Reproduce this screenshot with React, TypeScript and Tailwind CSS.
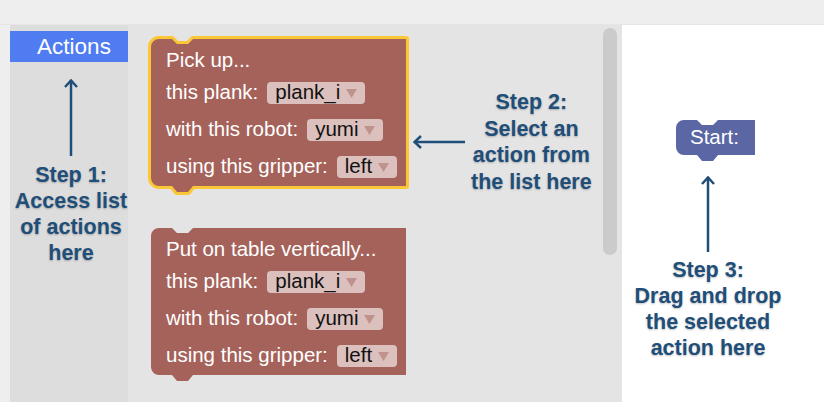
const font = { fontFamily: '"Liberation Sans", Arial, sans-serif' };

function BlockShape({ w, h, fill, stroke }: { w: number; h: number; fill: string; stroke?: string }) {
    const d = `M0,8 A8,8 0 0 1 8,0 H21 L26,5 H37 L42,0 H${w} V${h} H42 L37,${h + 6} H26 L21,${h} H8 A8,8 0 0 1 0,${h - 8} Z`;
    return (
        <svg className="absolute left-0 top-0 overflow-visible" width={w} height={h}>
            <path d={d} fill={fill} stroke={stroke ?? "none"} strokeWidth={stroke ? 6 : 0} paintOrder="stroke" strokeLinejoin="round" />
        </svg>
    );
}

function Field({ value }: { value: string }) {
    return (
        <span className="ml-[9px] flex h-[22px] items-center rounded-[4px] bg-[#dbc0bd] pl-[8px] pr-[8px] text-[20.5px] leading-none text-[#111]">
            {value}
            <svg width="11" height="9" viewBox="0 0 11 9" className="ml-[6px] mt-[2px]">
                <path d="M0,0 H11 L5.5,9 Z" fill="#bf928c" />
            </svg>
        </span>
    );
}

function ActionBlock({ title, selected }: { title: string; selected?: boolean }) {
    return (
        <div className="relative h-[147px] w-[255px]">
            <BlockShape w={255} h={147} fill="#a5625a" stroke={selected ? "#fcc736" : undefined} />
            <div className="relative flex flex-col pl-[15px] pt-[7px] text-[20.5px] text-white">
                <div className="flex h-[28px] items-center">{title}</div>
                <div className="flex h-[37px] items-center">
                    this plank:<Field value="plank_i" />
                </div>
                <div className="flex h-[37px] items-center">
                    with this robot:<Field value="yumi" />
                </div>
                <div className="flex h-[37px] items-center">
                    using this gripper:<Field value="left" />
                </div>
            </div>
        </div>
    );
}

function UpArrow({ h }: { h: number }) {
    return (
        <svg width="14" height={h} viewBox={`0 0 14 ${h}`}>
            <path d={`M7,1 V${h}`} stroke="#1f4e79" strokeWidth="2.5" fill="none" />
            <path d="M1,8 L7,1.5 L13,8" stroke="#1f4e79" strokeWidth="2.5" fill="none" />
        </svg>
    );
}

function StepText({ lines, leading = "leading-[26px]" }: { lines: string[]; leading?: string }) {
    return (
        <div className={`text-center text-[21.5px] font-bold text-[#1f4e79] [text-shadow:0_1px_2px_rgba(0,0,0,0.25)] ${leading}`}>
            {lines.map((l) => (
                <div key={l} className="whitespace-nowrap">
                    {l}
                </div>
            ))}
        </div>
    );
}

export default function App() {
    return (
        <div style={font} className="flex h-[402px] w-[824px] flex-col overflow-hidden bg-[#efeeee]">
            <div className="h-[25px] shrink-0 border-b border-[#e6e6e6]" />
            <div className="flex flex-1">
                <div className="w-[10px]" />

                {/* toolbox */}
                <div className="flex w-[118px] flex-col items-center bg-[#dddddd] pt-[6px]">
                    <div className="flex h-[31px] w-full items-center justify-center bg-[#4f7cf0] pl-[10px] text-[22.5px] text-white">
                        Actions
                    </div>
                    <div className="mt-[17px] ml-[4px]">
                        <UpArrow h={77} />
                    </div>
                    <div className="mt-[6px] ml-[4px]">
                        <StepText lines={["Step 1:", "Access list", "of actions", "here"]} />
                    </div>
                </div>

                {/* flyout */}
                <div className="flex w-[494px] items-start bg-[#e4e4e4]">
                    <div className="flex flex-col gap-[42px] pl-[23px] pt-[14px]">
                        <ActionBlock title="Pick up..." selected />
                        <ActionBlock title="Put on table vertically..." />
                    </div>
                    <div className="ml-[7px] mt-[64px] flex items-center gap-[6px]">
                        <svg width="52" height="14" viewBox="0 0 52 14">
                            <path d="M1.5,7 H52" stroke="#1f4e79" strokeWidth="2.5" fill="none" />
                            <path d="M8,1 L1.5,7 L8,13" stroke="#1f4e79" strokeWidth="2.5" fill="none" />
                        </svg>
                        <StepText lines={["Step 2:", "Select an", "action from", "the list here"]} leading="leading-[26.5px]" />
                    </div>
                    <div className="ml-auto mr-[5px] mt-[3px] h-[227px] w-[14px] rounded-full bg-[#cbcbcb]" />
                </div>

                {/* workspace */}
                <div className="flex flex-1 flex-col items-center bg-white pr-[30px]">
                    <div className="relative ml-[15px] mt-[95px] h-[35px] w-[79px]">
                        <BlockShape w={79} h={35} fill="#5b67a5" />
                        <div className="relative flex h-full items-center pl-[14px] text-[20.5px] text-white">Start:</div>
                    </div>
                    <div className="mt-[21px]">
                        <UpArrow h={76} />
                    </div>
                    <div className="mt-[5px]">
                        <StepText lines={["Step 3:", "Drag and drop", "the selected", "action here"]} />
                    </div>
                </div>
            </div>
        </div>
    );
}
